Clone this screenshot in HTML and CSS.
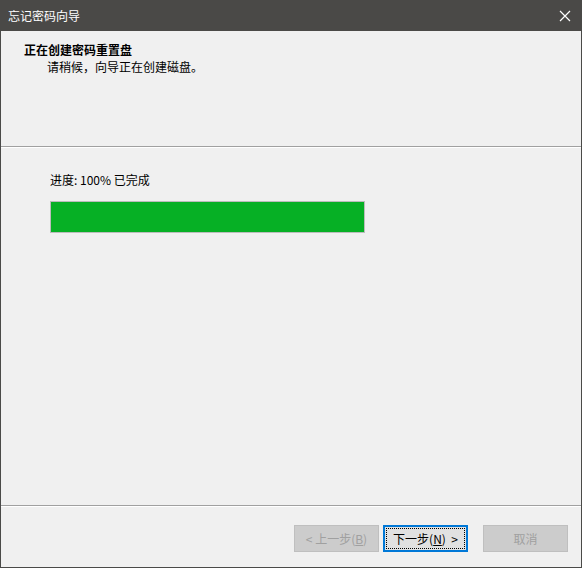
FILE: index.html
```html
<!DOCTYPE html>
<html lang="zh-CN">
<head>
<meta charset="utf-8">
<link rel="stylesheet" href="styles.css">
</head>
<body>
<div class="window">
  <div class="titlebar">
    <span class="title">忘记密码向导</span>
    <svg class="close" width="12" height="12" viewBox="0 0 12 12"><path d="M1 1L11 11M11 1L1 11" stroke="#fff" stroke-width="1.2" fill="none"/></svg>
  </div>
  <div class="header">
    <div class="h-title">正在创建密码重置盘</div>
    <div class="h-sub">请稍候，向导正在创建磁盘。</div>
  </div>
  <div class="sep"></div>
  <div class="content">
    <div class="progress-label">进度: 100% 已完成</div>
    <div class="progress"><div class="fill" style="width:100%"></div></div>
  </div>
  <div class="sep"></div>
  <div class="footer">
    <button class="btn disabled">&lt; 上一步(<u>B</u>)</button>
    <button class="btn focus"><span class="inner">下一步(<u>N</u>)&nbsp; &gt;</span></button>
    <button class="btn disabled cancel">取消</button>
  </div>
</div>
</body>
</html>
```
FILE: styles.css
```css
html, body { margin: 0; padding: 0; }
body {
  font-family: "Noto Sans CJK SC", "Noto Sans", sans-serif;
  font-size: 12px;
  color: #000;
  background: #f0f0f0;
}
.window {
  width: 582px;
  height: 568px;
  box-sizing: border-box;
  border: 1px solid #4a4a48;
  border-top: none;
  display: flex;
  flex-direction: column;
  background: #f0f0f0;
}
.titlebar {
  height: 31px;
  flex: none;
  background: #4a4947;
  margin: 0 -1px;
  display: flex;
  align-items: center;
  justify-content: space-between;
  padding: 0 11px 0 8px;
}
.title { color: #fff; font-size: 12px; line-height: 1; }
.close { display: block; }
.header {
  height: 115px;
  flex: none;
  box-sizing: border-box;
  padding: 10px 0 0 23px;
}
.h-title { font-weight: bold; line-height: 18px; }
.h-sub { padding-left: 23px; line-height: 16px; }
.sep {
  flex: none;
  height: 1px;
  background: #a0a0a0;
  border-bottom: 1px solid #fff;
}
.content {
  flex: 1;
  padding: 23px 0 0 49px;
}
.progress-label { line-height: 18px; color: #000; }
.progress {
  margin-top: 12px;
  width: 315px;
  height: 32px;
  box-sizing: border-box;
  border: 1px solid #bcbcbc;
  background: #e6e6e6;
}
.fill { height: 100%; background: #06b025; }
.footer {
  height: 60px;
  flex: none;
  box-sizing: border-box;
  display: flex;
  align-items: flex-start;
  padding: 18px 13px 0 0;
  justify-content: flex-end;
  gap: 4px;
}
.btn {
  font-family: inherit;
  font-size: 12px;
  width: 85px;
  height: 27px;
  box-sizing: border-box;
  border: 1px solid #adadad;
  background: #e1e1e1;
  color: #000;
  padding: 0;
  margin: 0;
  display: flex;
  align-items: center;
  justify-content: center;
}
.btn.disabled {
  background: #cccccc;
  border-color: #bfbfbf;
  color: #a0a0a0;
}
.btn.cancel { margin-left: 11px; }
.btn.focus {
  border: 2px solid #0078d7;
  background: #e1e1e1;
  padding: 1px;
}
.btn.focus .inner {
  display: flex;
  align-items: center;
  justify-content: center;
  width: 100%;
  height: 100%;
  box-sizing: border-box;
  border: 1px dotted #000;
}
```
